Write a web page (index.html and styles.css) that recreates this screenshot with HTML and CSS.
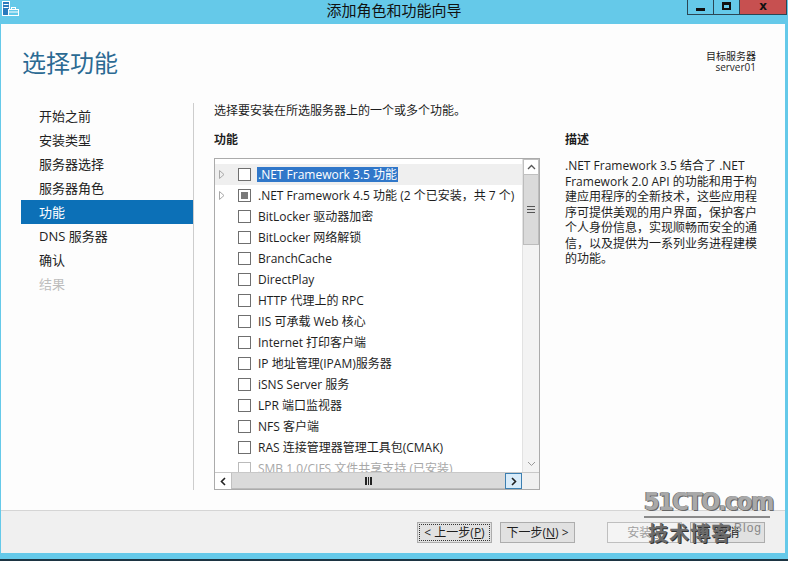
FILE: index.html
```html
<!DOCTYPE html>
<html lang="zh-CN">
<head>
    <meta charset="UTF-8">
    <title>添加角色和功能向导</title>
    <link rel="stylesheet" href="styles.css">
</head>
<body>
    <div class="window">
        <div class="titlebar">
            <svg class="app-icon" width="19" height="18" viewBox="0 0 19 18">
                <rect x="1.5" y="1.5" width="7" height="14" fill="#2a7bbd" stroke="#fff" stroke-width="1"/>
                <rect x="2.5" y="4" width="5" height="1" fill="#fff"/>
                <rect x="2.5" y="7" width="5" height="1" fill="#fff"/>
                <rect x="7.5" y="9.5" width="10" height="6" fill="#65c9e9" stroke="#fff" stroke-width="1"/>
                <rect x="10.5" y="7.5" width="4" height="2" fill="none" stroke="#fff" stroke-width="1"/>
                <line x1="7.5" y1="12" x2="17.5" y2="12" stroke="#fff"/>
            </svg>
            <div class="title">添加角色和功能向导</div>
            <div class="win-buttons">
                <div class="win-btn min"><span class="min-bar"></span></div>
                <div class="win-btn max"><span class="max-box"></span></div>
                <div class="win-btn close">x</div>
            </div>
        </div>

        <div class="frame">
            <div class="content">
                <div class="header">
                    <h1>选择功能</h1>
                    <div class="target">
                        <div>目标服务器</div>
                        <div>server01</div>
                    </div>
                </div>

                <div class="body">
                    <ul class="steps">
                        <li>开始之前</li>
                        <li>安装类型</li>
                        <li>服务器选择</li>
                        <li>服务器角色</li>
                        <li class="active">功能</li>
                        <li>DNS 服务器</li>
                        <li>确认</li>
                        <li class="disabled">结果</li>
                    </ul>

                    <div class="main">
                        <div class="features">
                            <p class="intro">选择要安装在所选服务器上的一个或多个功能。</p>
                            <div class="label">功能</div>
                            <div class="listbox">
                                <div class="items">
                                    <div class="row current"><span class="exp"><svg width="6" height="9" viewBox="0 0 6 9"><path d="M0.5 0.5 L5 4.5 L0.5 8.5 Z" fill="none" stroke="#a8a8a8"/></svg></span><span class="chk"></span><span class="text sel">.NET Framework 3.5 功能</span></div>
                                    <div class="row"><span class="exp"><svg width="6" height="9" viewBox="0 0 6 9"><path d="M0.5 0.5 L5 4.5 L0.5 8.5 Z" fill="none" stroke="#a8a8a8"/></svg></span><span class="chk partial"></span><span class="text">.NET Framework 4.5 功能 (2 个已安装，共 7 个)</span></div>
                                    <div class="row"><span class="exp"></span><span class="chk"></span><span class="text">BitLocker 驱动器加密</span></div>
                                    <div class="row"><span class="exp"></span><span class="chk"></span><span class="text">BitLocker 网络解锁</span></div>
                                    <div class="row"><span class="exp"></span><span class="chk"></span><span class="text">BranchCache</span></div>
                                    <div class="row"><span class="exp"></span><span class="chk"></span><span class="text">DirectPlay</span></div>
                                    <div class="row"><span class="exp"></span><span class="chk"></span><span class="text">HTTP 代理上的 RPC</span></div>
                                    <div class="row"><span class="exp"></span><span class="chk"></span><span class="text">IIS 可承载 Web 核心</span></div>
                                    <div class="row"><span class="exp"></span><span class="chk"></span><span class="text">Internet 打印客户端</span></div>
                                    <div class="row"><span class="exp"></span><span class="chk"></span><span class="text">IP 地址管理(IPAM)服务器</span></div>
                                    <div class="row"><span class="exp"></span><span class="chk"></span><span class="text">iSNS Server 服务</span></div>
                                    <div class="row"><span class="exp"></span><span class="chk"></span><span class="text">LPR 端口监视器</span></div>
                                    <div class="row"><span class="exp"></span><span class="chk"></span><span class="text">NFS 客户端</span></div>
                                    <div class="row"><span class="exp"></span><span class="chk"></span><span class="text">RAS 连接管理器管理工具包(CMAK)</span></div>
                                    <div class="row installed"><span class="exp"></span><span class="chk"></span><span class="text">SMB 1.0/CIFS 文件共享支持 (已安装)</span></div>
                                </div>
                                <div class="vscroll">
                                    <div class="sb-btn up"><svg width="9" height="6" viewBox="0 0 9 6"><path d="M1 5 L4.5 1.5 L8 5" fill="none" stroke="#555" stroke-width="1.3"/></svg></div>
                                    <div class="vthumb"><span class="grip-h"></span></div>
                                    <div class="sb-space"></div>
                                    <div class="sb-btn down"><svg width="9" height="6" viewBox="0 0 9 6"><path d="M1 1 L4.5 4.5 L8 1" fill="none" stroke="#999" stroke-width="1"/></svg></div>
                                </div>
                                <div class="hscroll">
                                    <div class="sb-btn left"><svg width="6" height="9" viewBox="0 0 6 9"><path d="M5 1 L1.5 4.5 L5 8" fill="none" stroke="#222" stroke-width="1.6"/></svg></div>
                                    <div class="hthumb"><span class="grip-v"></span></div>
                                    <div class="sb-btn right"><svg width="6" height="9" viewBox="0 0 6 9"><path d="M1 1 L4.5 4.5 L1 8" fill="none" stroke="#222" stroke-width="1.6"/></svg></div>
                                </div>
                                <div class="corner"></div>
                            </div>
                        </div>

                        <div class="desc">
                            <div class="label">描述</div>
                            <p>.NET Framework 3.5 结合了 .NET Framework 2.0 API 的功能和用于构建应用程序的全新技术，这些应用程序可提供美观的用户界面，保护客户个人身份信息，实现顺畅而安全的通信，以及提供为一系列业务进程建模的功能。</p>
                        </div>
                    </div>
                </div>
            </div>

            <div class="footer">
                <button class="btn focused"><span>&lt; 上一步(<u>P</u>)</span></button>
                <button class="btn">下一步(<u>N</u>) &gt;</button>
                <button class="btn disabled wide-gap">安装(<u>I</u>)</button>
                <button class="btn">取消</button>
            </div>
        </div>

        <div class="watermark">
            <div class="wm-site">51CTO.com</div>
            <div class="wm-blog">技术博客<span>Blog</span></div>
        </div>
    </div>
</body>
</html>
```

FILE: styles.css
```css
* { margin: 0; padding: 0; box-sizing: border-box; }

body {
    font-family: "Open Sans", "Noto Sans CJK SC", sans-serif;
    font-size: 12px;
    color: #1e1e1e;
    background: #65c9e9;
}

.window {
    position: relative;
    width: 788px;
    height: 561px;
    display: flex;
    flex-direction: column;
    background: #65c9e9;
    border-bottom: 2px solid #1c3442;
    overflow: hidden;
}

/* title bar */
.titlebar {
    position: relative;
    height: 24px;
    flex: none;
    display: flex;
    align-items: flex-start;
}

.app-icon {
    margin: 0 0 0 1px;
}

.title {
    position: absolute;
    left: 0;
    right: 0;
    top: 0;
    text-align: center;
    font-family: "Noto Sans CJK SC", sans-serif;
    font-size: 15px;
    line-height: 20px;
    color: #111;
}

.win-buttons {
    position: absolute;
    top: 0;
    right: 1px;
    display: flex;
}

.win-btn {
    height: 15px;
    border: 1px solid #2b4654;
    border-top: none;
    display: flex;
    align-items: center;
    justify-content: center;
}

.win-btn.min { width: 27px; }
.win-btn.max { width: 26px; border-left: none; }
.win-btn.close {
    width: 47px;
    border-left: none;
    background: #c75050;
    font-family: "DejaVu Sans", sans-serif;
    font-weight: bold;
    font-size: 12px;
    line-height: 12px;
    color: #111;
    padding-bottom: 2px;
}

.min-bar {
    width: 9px;
    height: 3px;
    background: #111;
    margin-top: 4px;
}

.max-box {
    width: 9px;
    height: 8px;
    border: 2px solid #111;
    border-top-width: 3px;
    margin-bottom: 2px;
}

/* frame */
.frame {
    flex: 1;
    margin: 0 3px 6px 1px;
    display: flex;
    flex-direction: column;
    background: #fdfdfd;
}

.content {
    flex: 1;
    display: flex;
    flex-direction: column;
}

.header {
    height: 79px;
    flex: none;
    display: flex;
    justify-content: space-between;
    padding: 22px 29px 0 21px;
}

.header h1 {
    font-family: "Noto Sans CJK SC", sans-serif;
    font-weight: normal;
    font-size: 24px;
    line-height: 32px;
    color: #2b6a93;
}

.target {
    text-align: right;
    font-size: 10px;
    line-height: 11px;
    padding-top: 5px;
}

.body {
    flex: 1;
    display: flex;
    padding-bottom: 20px;
}

/* steps */
.steps {
    list-style: none;
    width: 193px;
    padding: 1px 0 0 20px;
    border-right: 1px solid #cdcdcd;
}

.steps li {
    height: 24px;
    line-height: 25px;
    padding-left: 18px;
    font-size: 13px;
    color: #222;
}

.steps li.active {
    background: #0c70b7;
    color: #fff;
}

.steps li.disabled {
    color: #bdbdbd;
}

/* main */
.main {
    display: flex;
    padding-left: 20px;
}

.features {
    width: 326px;
}

.intro {
    line-height: 16px;
}

.label {
    font-weight: bold;
    line-height: 16px;
    margin-top: 13px;
}

.listbox {
    margin-top: 10px;
    width: 326px;
    height: 332px;
    border: 1px solid #ababab;
    display: grid;
    grid-template-columns: 1fr 17px;
    grid-template-rows: 1fr 17px;
    background: #fff;
}

.items {
    overflow: hidden;
    padding-top: 5px;
}

.row {
    height: 21px;
    display: flex;
    align-items: center;
    white-space: nowrap;
}

.row.current {
    background: #efefef;
}

.exp {
    width: 23px;
    flex: none;
    display: flex;
    align-items: center;
    padding-left: 4px;
}

.chk {
    width: 13px;
    height: 13px;
    flex: none;
    border: 1px solid #6f6f6f;
    background: #fff;
    margin-right: 7px;
    position: relative;
}

.chk.partial::after {
    content: "";
    position: absolute;
    left: 2px;
    top: 2px;
    width: 7px;
    height: 7px;
    background: #7a7a7a;
}

.text {
    line-height: 15px;
}

.text.sel {
    background: #3077c9;
    color: #fff;
    padding: 0 1px;
    margin-left: -1px;
}

.row.installed {
    color: #a8a8a8;
}

.row.installed .chk {
    border-color: #bbb;
}

/* scrollbars */
.vscroll {
    display: flex;
    flex-direction: column;
    background: #f3f3f3;
    border-left: 1px solid #e2e2e2;
}

.sb-btn {
    flex: none;
    display: flex;
    align-items: center;
    justify-content: center;
}

.sb-btn.up {
    height: 16px;
    background: #fff;
    border: 1px solid #c0c0c0;
}

.sb-btn.down {
    height: 17px;
}

.vthumb {
    height: 70px;
    background: #dadada;
    border: 1px solid #bcbcbc;
    border-top: none;
    display: flex;
    align-items: center;
    justify-content: center;
}

.grip-h {
    width: 8px;
    height: 7px;
    border-top: 1px solid #555;
    border-bottom: 1px solid #555;
    background: linear-gradient(#555, #555) center / 8px 1px no-repeat;
}

.sb-space {
    flex: 1;
}

.hscroll {
    display: flex;
    border-top: 1px solid #c8c8c8;
}

.sb-btn.left {
    width: 17px;
    background: #fff;
    border-right: 1px solid #c0c0c0;
}

.hthumb {
    flex: 1;
    background: #dadada;
    border-bottom: 1px solid #bcbcbc;
    display: flex;
    align-items: center;
    justify-content: center;
}

.grip-v {
    width: 7px;
    height: 8px;
    border-left: 2px solid #222;
    border-right: 2px solid #222;
    background: linear-gradient(#222, #222) center / 1px 8px no-repeat;
}

.sb-btn.right {
    width: 17px;
    background: #d9ecfa;
    border: 1px solid #3c7fb1;
}

.corner {
    background: #f0f0f0;
    border-top: 1px solid #c8c8c8;
}

/* description */
.desc {
    width: 200px;
    margin-left: 25px;
    padding-top: 16px;
}

.desc p {
    margin-top: 10px;
    line-height: 15.5px;
}

/* footer */
.footer {
    height: 43px;
    flex: none;
    background: #f0f0f0;
    border-top: 1px solid #d5d5d5;
    display: flex;
    justify-content: flex-end;
    gap: 8px;
    padding: 11px 20px 0 0;
}

.btn {
    width: 75px;
    height: 21px;
    background: #e1e1e1;
    border: 1px solid #adadad;
    font-family: "Open Sans", "Noto Sans CJK SC", sans-serif;
    font-size: 12px;
    color: #1e1e1e;
    line-height: 17px;
}

.btn.focused {
    padding: 1px;
}

.btn.focused span {
    display: block;
    height: 100%;
    border: 1px dotted #333;
    line-height: 15px;
}

.btn.wide-gap {
    margin-left: 24px;
}

.btn.disabled {
    background: #f4f4f4;
    border-color: #bfbfbf;
    color: #a0a0a0;
}

/* site watermark */
.watermark {
    position: absolute;
    left: 644px;
    top: 488px;
    width: 140px;
    pointer-events: none;
}

.wm-site {
    font-family: "DejaVu Sans Condensed", "DejaVu Sans", sans-serif;
    font-weight: bold;
    font-size: 25px;
    line-height: 28px;
    letter-spacing: -1.5px;
    color: #a9a9a9;
    border-bottom: 2px solid #8a8a8a;
    width: 126px;
    text-shadow: 1px 1px 0 #666, -1px 0 0 #777;
}

.wm-blog {
    margin-top: -3px;
    padding-left: 4px;
    font-family: "Noto Sans CJK SC", sans-serif;
    font-weight: bold;
    font-size: 20px;
    line-height: 26px;
    color: #6c6c6c;
    text-shadow: 1px 1px 0 #333;
    letter-spacing: 1px;
}

.wm-blog span {
    font-family: "Liberation Sans", sans-serif;
    font-size: 12px;
    font-weight: normal;
    vertical-align: 9px;
    color: #888;
    text-shadow: none;
    margin-left: 2px;
}
```
